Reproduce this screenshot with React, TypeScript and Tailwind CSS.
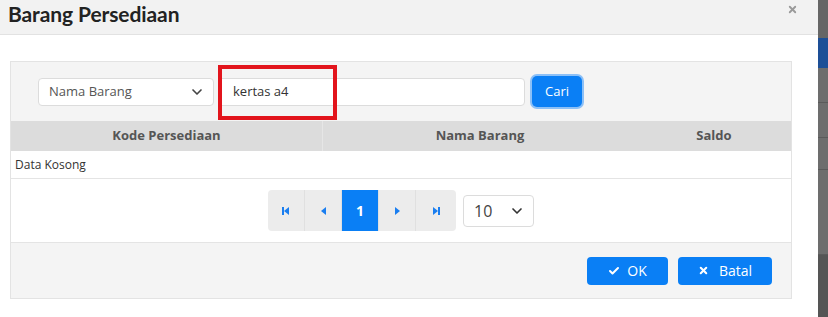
import React from 'react';
import { ChevronDown, Check, X } from 'lucide-react';

const font = { fontFamily: '"Open Sans", "Noto Sans", sans-serif' };

const PageBtn: React.FC<{ children: React.ReactNode; active?: boolean; className?: string }> = ({ children, active, className }) => (
  <div
    className={`w-[37px] h-full flex items-center justify-center border-r border-[#e0e0e0] ${
      active ? 'bg-[#0a7ff5] text-white font-bold' : 'bg-[#ececec] text-[#1a7ef0]'
    } ${className ?? ''}`}
  >
    {children}
  </div>
);

const App: React.FC = () => {
  return (
    <div className="w-[828px] h-[317px] flex overflow-hidden bg-white" style={font}>
      {/* modal */}
      <div className="w-[818px] h-full flex flex-col bg-white">
        <div className="h-[35px] shrink-0 flex items-start justify-between bg-[#f2f2f2] border-b border-[#e2e2e2] pl-[8px] pr-[20px]">
          <h1 className="font-['Lato',sans-serif] text-[21px] font-bold text-[#222] leading-[27px] tracking-[-0.1px]">Barang Persediaan</h1>
          <X size={11} strokeWidth={4} className="text-[#9a9a9a] mt-[4px]" />
        </div>

        <div className="pt-[26px] pl-[10px]">
          <div className="w-[782px] h-[238px] flex flex-col border border-[#e3e3e3] bg-[#f4f4f4]">
            {/* search row */}
            <div className="h-[59px] shrink-0 flex items-center pl-[27px] relative">
              <div className="w-[176px] h-[28px] flex items-center justify-between bg-white border border-[#dcdcdc] rounded-[4px] pl-[10px] pr-[8px] text-[13px] text-[#555]">
                <span>Nama Barang</span>
                <ChevronDown size={16} strokeWidth={2.5} className="text-[#444]" />
              </div>
              <div className="ml-[4px] w-[307px] h-[28px] flex items-center bg-white border border-[#dcdcdc] rounded-[4px] pl-[14px] text-[13px] text-[#333]">
                kertas a4
              </div>
              <button className="ml-[7px] w-[50px] h-[31px] rounded-[5px] bg-[#0a7ff5] ring-2 ring-[#8cc0f7] text-white text-[13px]">
                Cari
              </button>
              <div className="absolute left-[207px] top-[3px] w-[119px] h-[55px] border-[4px] border-[#e2141c]" />
            </div>

            {/* table */}
            <div className="h-[30px] shrink-0 grid grid-cols-[312px_314px_1fr] bg-[#dcdcdc] text-[13px] font-bold text-[#555]">
              <div className="flex items-center justify-center border-r border-[#e6e6e6]">Kode Persediaan</div>
              <div className="flex items-center justify-center">Nama Barang</div>
              <div className="flex items-center justify-center">Saldo</div>
            </div>
            <div className="h-[28px] shrink-0 flex items-center bg-white border-b border-[#e4e4e4] pl-[4px] text-[12px] text-[#333]">
              Data Kosong
            </div>

            {/* pagination */}
            <div className="h-[64px] shrink-0 flex items-center justify-center bg-white border-b border-[#e4e4e4] gap-[7px]">
              <div className="h-[41px] flex rounded-[4px] overflow-hidden">
                <PageBtn>
                  <svg width="8" height="8" viewBox="0 0 8 8"><rect x="0" y="0" width="2" height="8" fill="currentColor" /><path d="M7 0 L2 4 L7 8 Z" fill="currentColor" /></svg>
                </PageBtn>
                <PageBtn>
                  <svg width="5" height="8" viewBox="0 0 5 8"><path d="M5 0 L0 4 L5 8 Z" fill="currentColor" /></svg>
                </PageBtn>
                <PageBtn active className="text-[14px]">1</PageBtn>
                <PageBtn>
                  <svg width="5" height="8" viewBox="0 0 5 8"><path d="M0 0 L5 4 L0 8 Z" fill="currentColor" /></svg>
                </PageBtn>
                <PageBtn className="border-r-0 w-[40px]">
                  <svg width="8" height="8" viewBox="0 0 8 8"><path d="M1 0 L6 4 L1 8 Z" fill="currentColor" /><rect x="6" y="0" width="2" height="8" fill="currentColor" /></svg>
                </PageBtn>
              </div>
              <div className="w-[71px] h-[32px] flex items-center justify-between bg-white border border-[#dcdcdc] rounded-[4px] pl-[10px] pr-[8px] text-[16px] text-[#444]">
                <span>10</span>
                <ChevronDown size={16} strokeWidth={2.5} className="text-[#333]" />
              </div>
            </div>

            {/* footer */}
            <div className="flex-1 flex items-center justify-end gap-[10px] pr-[19px]">
              <button className="w-[81px] h-[28px] flex items-center justify-center gap-[7px] rounded-[4px] bg-[#0a7ff5] text-white text-[14px]">
                <Check size={12} strokeWidth={4} />
                OK
              </button>
              <button className="w-[94px] h-[28px] flex items-center justify-center gap-[10px] rounded-[4px] bg-[#0a7ff5] text-white text-[14px]">
                <X size={11} strokeWidth={4.5} />
                Batal
              </button>
            </div>
          </div>
        </div>
      </div>

      {/* backdrop page edge */}
      <div className="w-[10px] h-full flex flex-col bg-[#6d6d6d]">
        <div className="h-[38px] bg-[#666]" />
        <div className="h-[30px] bg-[#1d4f97]" />
        <div className="h-[35px] border-b border-[#5a5a5a]" />
        <div className="h-[35px] border-b border-[#5a5a5a]" />
        <div className="h-[32px] border-b border-[#5a5a5a]" />
        <div className="h-[85px] border-b border-[#5a5a5a]" />
        <div className="flex-1 bg-[#555]" />
      </div>
    </div>
  );
};

export default App;
